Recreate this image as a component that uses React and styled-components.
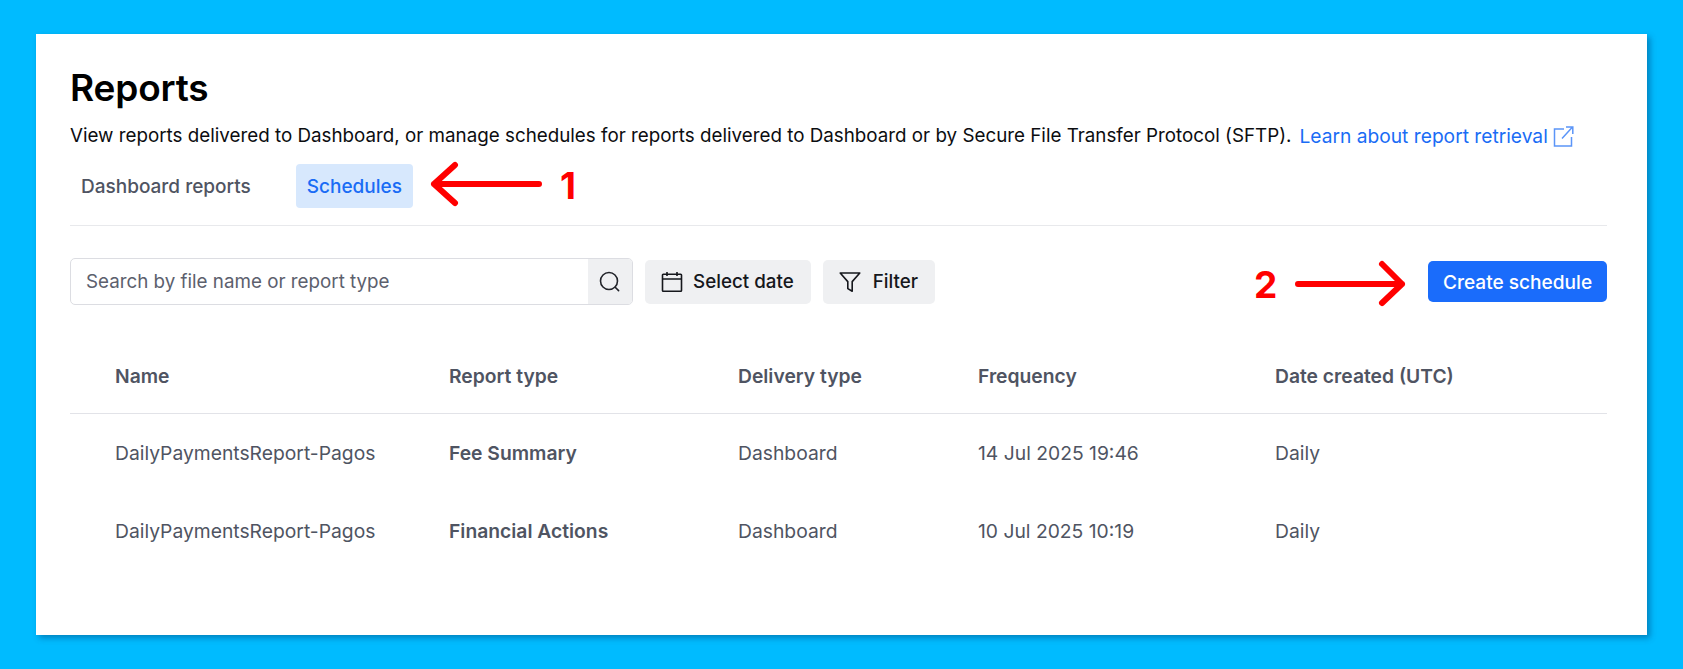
import React from 'react';
import styled, { createGlobalStyle } from 'styled-components';

const Global = createGlobalStyle`
  html, body { margin: 0; padding: 0; background: #00bbff; }
  body { font-family: Inter, "Liberation Sans", sans-serif; -webkit-font-smoothing: antialiased; }
`;
const Page = styled.div`
  position: relative;
  width: 1683px;
  height: 669px;
  overflow: hidden;
  background: #00bbff;
  padding: 34px 36px 34px 36px;
  box-sizing: border-box;
`;
const Card = styled.main`
  background: #fff;
  height: 601px;
  box-sizing: border-box;
  padding: 32px 40px 0 34px;
  box-shadow: 3px 3px 6px rgba(0, 60, 110, 0.45);
`;
const Title = styled.h1`
  margin: 0;
  font-size: 37px;
  line-height: 44px;
  font-weight: 600;
  color: #000;
  letter-spacing: -0.15px;
`;
const Description = styled.p`
  margin: 14px 0 0;
  font-size: 18.8px;
  line-height: 24px;
  color: #0c0d10;
  white-space: nowrap;
  display: flex;
  align-items: center;
`;
const LearnLink = styled.a`
  color: #1a6cf5;
  margin-left: 8px;
  display: inline-flex;
  align-items: center;
  gap: 5px;
  font-size: 19.2px;
`;
const Tabs = styled.nav`
  display: flex;
  gap: 34px;
  margin-top: 16px;
  padding-bottom: 17px;
  border-bottom: 1px solid #e8e9ec;
`;
const Tab = styled.div`
  height: 44px;
  padding: 0 11px;
  display: flex;
  align-items: center;
  font-size: 19px;
  font-weight: 500;
  border-radius: 4px;
  color: ${p => (p.$active ? '#1a6cf5' : '#4f5462')};
  background: ${p => (p.$active ? '#d7e8fd' : 'transparent')};
`;
const Toolbar = styled.div`
  display: flex;
  align-items: center;
  margin-top: 32px;
  gap: 12px;
`;
const Search = styled.div`
  width: 563px;
  height: 47px;
  box-sizing: border-box;
  display: flex;
  border: 1px solid #dcdde2;
  border-radius: 5px;
  overflow: hidden;
`;
const SearchText = styled.div`
  flex: 1;
  display: flex;
  align-items: center;
  padding-left: 15px;
  font-size: 18.8px;
  color: #5c606d;
`;
const SearchButton = styled.div`
  width: 44px;
  display: flex;
  align-items: center;
  justify-content: center;
  background: #eff0f2;
  color: #22242a;
`;
const ToolButton = styled.div`
  height: 44px;
  box-sizing: border-box;
  padding: 0 17px 0 16px;
  display: flex;
  align-items: center;
  gap: 10px;
  background: #eff0f2;
  border-radius: 5px;
  font-size: 18.8px;
  font-weight: 500;
  color: #15171c;
`;
const CreateButton = styled.div`
  margin-left: auto;
  height: 41px;
  width: 179px;
  display: flex;
  align-items: center;
  justify-content: center;
  background: #1a6cfb;
  border-radius: 5px;
  color: #fff;
  font-size: 19.1px;
  font-weight: 500;
`;
const Table = styled.div`
  margin-top: 28px;
`;
const Row = styled.div`
  display: grid;
  grid-template-columns: 334px 289px 240px 297px 1fr;
  padding-left: 45px;
  align-items: center;
  box-sizing: border-box;
  padding-top: ${p => (p.$head ? '6px' : '0')};
  height: ${p => (p.$head ? '81px' : '78px')};
  border-bottom: ${p => (p.$head ? '1px solid #e2e3e8' : 'none')};
  font-size: 19.3px;
  color: #4f5462;
  font-weight: ${p => (p.$head ? 600 : 400)};
`;
const Strong = styled.span`
  font-weight: 600;
`;
const Overlay = styled.svg`
  position: absolute;
  left: 0;
  top: 0;
  pointer-events: none;
`;
const Marker = styled.span`
  position: absolute;
  left: ${p => p.$x}px;
  top: ${p => p.$y}px;
  font-size: 37px;
  line-height: 37px;
  font-weight: 700;
  color: #ff0000;
`;

const CalendarIcon = () => (
  <svg width="22" height="22" viewBox="0 0 22 22" fill="none" stroke="currentColor" strokeWidth="1.6">
    <rect x="1.5" y="3.2" width="19" height="17" rx="0.8" />
    <path d="M1.5 8h19M6 1v4M16 1v4" />
  </svg>
);
const FilterIcon = () => (
  <svg width="24" height="22" viewBox="0 0 24 22" fill="none" stroke="currentColor" strokeWidth="1.6" strokeLinejoin="round">
    <path d="M1.2 2h19.6l-7.6 8.6v9.6l-4.4-2.6v-7z" />
  </svg>
);
const SearchIcon = () => (
  <svg width="22" height="22" viewBox="0 0 22 22" fill="none" stroke="currentColor" strokeWidth="1.6" strokeLinecap="round">
    <circle cx="10" cy="10" r="8.5" />
    <path d="M16.2 16.2l3.4 3.4" />
  </svg>
);
const ExternalIcon = () => (
  <svg width="21" height="21" viewBox="0 0 21 21" fill="none" stroke="#5b95f8" strokeWidth="1.5">
    <path d="M11 3H1.5v17h17v-9" />
    <path d="M9 12.5L19.5 1M13 1h6.8v7" />
  </svg>
);

const rows = [
  ['DailyPaymentsReport-Pagos', 'Fee Summary', 'Dashboard', '14 Jul 2025 19:46', 'Daily'],
  ['DailyPaymentsReport-Pagos', 'Financial Actions', 'Dashboard', '10 Jul 2025 10:19', 'Daily'],
];

export default function App() {
  return (
    <Page>
      <Global />
      <Card>
        <Title>Reports</Title>
        <Description>
          View reports delivered to Dashboard, or manage schedules for reports delivered to Dashboard or by Secure File Transfer Protocol (SFTP).
          <LearnLink>Learn about report retrieval <ExternalIcon /></LearnLink>
        </Description>
        <Tabs>
          <Tab>Dashboard reports</Tab>
          <Tab $active>Schedules</Tab>
        </Tabs>
        <Toolbar>
          <Search>
            <SearchText>Search by file name or report type</SearchText>
            <SearchButton><SearchIcon /></SearchButton>
          </Search>
          <ToolButton><CalendarIcon />Select date</ToolButton>
          <ToolButton><FilterIcon />Filter</ToolButton>
          <CreateButton>Create schedule</CreateButton>
        </Toolbar>
        <Table>
          <Row $head>
            <div>Name</div><div>Report type</div><div>Delivery type</div><div>Frequency</div><div>Date created (UTC)</div>
          </Row>
          {rows.map((r, i) => (
            <Row key={i}>
              <div>{r[0]}</div><Strong>{r[1]}</Strong><div>{r[2]}</div><div>{r[3]}</div><div>{r[4]}</div>
            </Row>
          ))}
        </Table>
      </Card>
      <Overlay width="1683" height="669" fill="none" stroke="#ff0000" strokeWidth="6" strokeLinecap="round" strokeLinejoin="round">
        <path d="M539 184H434M455 165L434 184L455 203" />
        <path d="M1298 284H1402M1382 264L1402 284L1382 303" />
      </Overlay>
      <Marker $x={560} $y={167}>1</Marker>
      <Marker $x={1254} $y={266}>2</Marker>
    </Page>
  );
}
